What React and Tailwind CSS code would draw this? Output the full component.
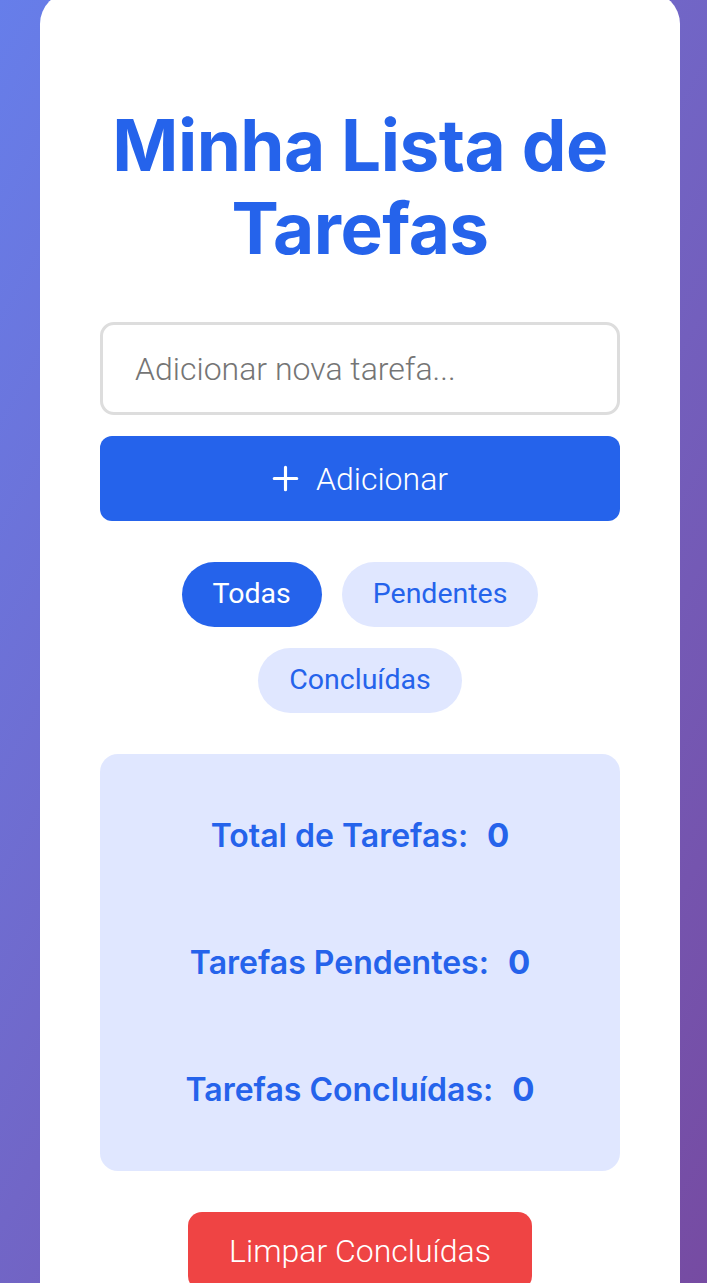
import React, { useState } from 'react';

const App = () => {
  const [filter, setFilter] = useState('all');

  const filters = [
    { id: 'all', label: 'Todas' },
    { id: 'pending', label: 'Pendentes' },
    { id: 'done', label: 'Concluídas' },
  ];

  const stats = [
    { label: 'Total de Tarefas:', value: 0 },
    { label: 'Tarefas Pendentes:', value: 0 },
    { label: 'Tarefas Concluídas:', value: 0 },
  ];

  return (
    <div className="h-[1283px] w-full overflow-hidden bg-linear-to-br from-[#667eea] to-[#764ba2] pl-[40px] pr-[27px]">
      <div className="-mt-[8px] bg-white rounded-[32px] px-[60px] pt-[112px] pb-[60px] min-h-[1400px]">
        <h1 className="text-center font-['Inter',sans-serif] font-bold text-[71px] leading-[83px] text-[#2563eb] tracking-[-0.5px]">
          Minha Lista de Tarefas
        </h1>

        <div className="mt-[52px] flex flex-col gap-[21px]">
          <input
            type="text"
            placeholder="Adicionar nova tarefa..."
            className="h-[93px] w-full rounded-[14px] border-[3px] border-[#dddddd] bg-white px-[32px] font-['Roboto',sans-serif] font-light text-[32px] text-gray-800 placeholder:text-[#757575] outline-none"
          />
          <button className="h-[85px] w-full rounded-[12px] bg-[#2563eb] flex items-center justify-center gap-[17px] font-['Roboto',sans-serif] font-light text-[32px] text-white">
            <svg width="27" height="27" viewBox="0 0 24 24" fill="none" stroke="currentColor" strokeWidth="2.8" strokeLinecap="round">
              <path d="M12 2v20M2 12h20" />
            </svg>
            Adicionar
          </button>
        </div>

        <div className="mt-[41px] flex flex-wrap justify-center gap-x-[20px] gap-y-[21px] px-[60px]">
          {filters.map((f) => (
            <button
              key={f.id}
              onClick={() => setFilter(f.id)}
              className={`h-[65px] rounded-full px-[31px] font-['Roboto',sans-serif] font-normal text-[28.5px] ${
                filter === f.id ? 'bg-[#2563eb] text-white' : 'bg-[#e0e7ff] text-[#2563eb]'
              }`}
            >
              {f.label}
            </button>
          ))}
        </div>

        <div className="mt-[41px] rounded-[18px] bg-[#e0e7ff] py-[62px] flex flex-col gap-[88px]">
          {stats.map((s) => (
            <p key={s.label} className="text-center font-['Inter',sans-serif] font-semibold text-[32px] leading-[38px] text-[#2563eb]">
              {s.label}
              <span className="ml-[19px] font-bold text-[33px]">{s.value}</span>
            </p>
          ))}
        </div>

        <div className="mt-[41px] flex justify-center">
          <button className="h-[78px] rounded-[14px] bg-[#ef4444] px-[41px] font-['Roboto',sans-serif] font-light text-[32px] text-white">
            Limpar Concluídas
          </button>
        </div>
      </div>
    </div>
  );
};

export default App;
